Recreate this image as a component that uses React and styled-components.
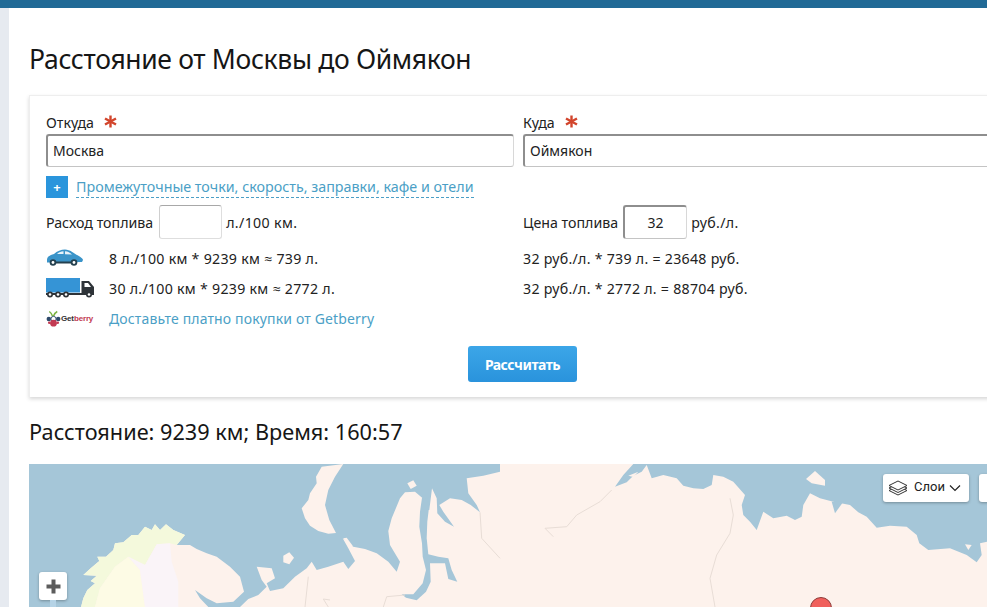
import React from "react";
import styled, { createGlobalStyle } from "styled-components";

const Global = createGlobalStyle`
  html, body { margin: 0; padding: 0; background: #fff; overflow: hidden; }
  body { font-family: "Noto Sans", "Open Sans", sans-serif; color: #1c1c1c; }
`;
const Page = styled.div`
  width: 987px; height: 607px; overflow: hidden; display: flex; flex-direction: column;
`;
const TopBar = styled.div`height: 8px; flex: none; background: #216a96;`;
const Body = styled.div`display: flex; flex: 1; min-height: 0;`;
const Gutter = styled.div`width: 9px; flex: none; background: #e6eaf0;`;
const Main = styled.main`
  flex: none; width: 1040px; padding-left: 20px; box-sizing: border-box;
`;
const Title = styled.h1`
  margin: 33px 0 0; height: 54px; font-size: 26.5px; line-height: 36px; font-weight: 400; color: #161616;
  letter-spacing: -0.35px;
`;
const Card = styled.section`
  box-sizing: border-box; height: 302px; background: #fff; border: 1px solid #eeeeee; border-bottom: 0;
  box-shadow: 0 2px 4px rgba(0,0,0,.16); padding: 15px 16px 0; display: flex; flex-direction: column;
`;
const Cols = styled.div`display: grid; grid-template-columns: 468px 1fr; column-gap: 9px;`;
const Field = styled.div`display: flex; flex-direction: column;`;
const Label = styled.label`
  height: 23px; display: flex; align-items: center; gap: 10px; font-size: 14.2px; line-height: 22px; color: #222;
`;
const Star = styled.svg`width: 13px; height: 13px; margin-top: -3px;`;
const BigInput = styled.input`
  box-sizing: border-box; width: 100%; height: 33px; padding: 0 5px 2px; font: inherit; font-size: 14px; color: #222;
  border-style: solid; border-color: #8e8e8e #d8d8d8 #c4c4c4 #8e8e8e; border-width: 2px 1px 1px 2px; border-radius: 3px;
  outline: none; background: #fff;
`;
const MoreRow = styled.div`display: flex; align-items: center; gap: 8px; margin-top: 9px; height: 22px;`;
const PlusBox = styled.span`
  width: 22px; height: 22px; background: #2a95dc; color: #fff; display: flex; align-items: center; justify-content: center;
  font-size: 13px; font-weight: 700; line-height: 1;
`;
const DashedLink = styled.a`
  font-size: 14.3px; line-height: 20px; color: #4b9fc6; border-bottom: 1px dashed #4b9fc6; letter-spacing: 0;
`;
const Rows = styled.div`display: grid; grid-template-columns: 468px 1fr; column-gap: 9px; margin-top: 7px;`;
const FuelCell = styled.div`display: flex; align-items: center; height: 34px; font-size: 14.2px; color: #222;`;
const Unit = styled.span`letter-spacing: 0.35px;`;
const SmallInput = styled.input`
  box-sizing: border-box; width: ${p => p.$w}px; height: 34px; margin: 0 4px 0 ${p => p.$ml}px; text-align: center; font: inherit; font-size: 14px; color: #222;
  border-style: solid; border-width: ${p => p.$strong ? "2px 1px 1px 2px" : "1px"};
  border-color: ${p => p.$strong ? "#8e8e8e #d8d8d8 #c4c4c4 #8e8e8e" : "#a8a8a8 #dedede #dedede #cfcfcf"}; border-radius: 3px; outline: none;
`;
const CalcCell = styled.div`
  display: flex; align-items: center; height: ${p => p.$h}px; font-size: 14.2px; letter-spacing: .27px; color: #222; margin-top: ${p => p.$mt || 0}px;
`;
const IconSlot = styled.span`width: 63px; flex: none; display: flex; align-items: center;`;
const PlainLink = styled.a`font-size: 14px; color: #4b9fc6; letter-spacing: 0.15px;`;
const LogoWrap = styled.span`display: flex; align-items: center; gap: 0;`;
const LogoText = styled.span`
  font-family: "Liberation Sans", sans-serif; font-size: 8px; font-weight: 700; letter-spacing: -0.15px; color: #333;
  b { color: #c23a52; font-weight: 700; }
`;
const SubmitWrap = styled.div`width: 945px; display: flex; justify-content: flex-start; padding-left: 422px; box-sizing: border-box; margin-top: 12px;`;
const Submit = styled.button`
  width: 109px; height: 36px; border: 0; border-radius: 3px; background: linear-gradient(#3ca6e8, #2a93dc);
  color: #fff; font: inherit; font-size: 14px; font-weight: 700; letter-spacing: -0.5px; padding: 0;
`;
const Result = styled.h2`
  margin: 18px 0 0; height: 49px; font-size: 21.7px; line-height: 34px; font-weight: 400; color: #161616;
`;
const MapBox = styled.div`position: relative; height: 143px; width: 1000px; overflow: hidden; background: #a5c6d8;`;
const MapArt = styled.svg`display: block;`;
const ZoomCtl = styled.div`
  position: absolute; left: 10px; top: 108px; width: 28px; height: 28px; background: #fff; border-radius: 3px;
  box-shadow: 0 1px 3px rgba(0,0,0,.3); display: flex; align-items: center; justify-content: center;
`;
const ZoomTrack = styled.div`
  position: absolute; left: 21px; top: 136px; width: 6px; height: 10px; background: #b5d3e6;
`;
const LayersBtn = styled.div`
  position: absolute; left: 854px; top: 10px; width: 86px; height: 28px; box-sizing: border-box; background: #fff; border-radius: 3px;
  box-shadow: 0 1px 3px rgba(0,0,0,.3); display: flex; align-items: center; padding-left: 5px; gap: 6px;
  font-family: Roboto, sans-serif; font-size: 13px; color: #222;
`;
const LayersText = styled.span`margin-top: -3px;`;
const Chevron = styled.svg`margin-left: -2px;`;
const ExtraBtn = styled.div`
  position: absolute; left: 950px; top: 10px; width: 40px; height: 28px; background: #fff; border-radius: 3px;
  box-shadow: 0 1px 3px rgba(0,0,0,.3);
`;

const WATER = "#a5c6d8";
const LAND = "#fdf2ec";
const LINE = "#e8ddd6";

const pts = (list) => list.map(([x, y]) => `${(x - 29).toFixed(1)},${(y - 464).toFixed(1)}`).join(" ");
const z3 = (list) => list.map(([x, y]) => [x / 3, 455 + y / 3]);
const z4 = (list) => list.map(([x, y]) => [500 + x / 3, 455 + y / 3]);

const scandCoast = [[243,456],[250,430],[262,405],[285,385],[272,378],[290,362],[250,360],[272,340],[298,318],[292,305],[318,305],[340,285],[345,265],[370,262],[395,240],[415,240],[435,215],[455,225],[465,208],[480,225],[498,208],[520,225],[555,240],[540,258],[530,270]];
const kola = [[530,270],[570,270],[590,282],[620,295],[650,305],[690,335],[720,365],[732,410],[700,440],[650,445],[620,430],[585,405],[600,430],[625,456]];
const landWest = z3([...scandCoast, ...kola]);
const northRussia = [[720,456],[745,432],[775,420],[800,395],[785,375],[770,335],[815,340],[825,370],[800,385],[810,408],[850,400],[885,365],[920,340],[935,320],[950,345],[985,335],[1030,320],[1045,342],[1065,318],[1045,280],[1028,250],[1060,275],[1095,282],[1130,295],[1165,320],[1190,350],[1200,320],[1182,290],[1170,270],[1165,228],[1175,190],[1200,130],[1215,112],[1245,110],[1268,130],[1278,165],[1288,165],[1296,100],[1310,130],[1312,175],[1335,200],[1362,215],[1330,170],[1318,150],[1350,130],[1385,135],[1412,150],[1440,172],[1430,150],[1405,115],[1400,70],[1450,62],[1500,50]];
const eastCoast = [[0,27],[400,27],[370,60],[345,95],[380,82],[400,62],[425,50],[440,30],[455,70],[490,60],[530,70],[550,92],[580,100],[610,102],[635,90],[640,60],[670,65],[700,80],[735,120],[725,150],[730,180],[750,200],[770,225],[790,170],[820,190],[860,182],[885,195],[905,185],[910,150],[930,115],[960,130],[1000,140],[1050,150],[1075,172],[1100,185],[1130,218],[1170,212],[1220,215],[1250,240],[1258,265],[1285,285],[1350,280],[1400,300],[1430,322],[1445,300],[1440,265],[1461,260],[1500,250],[1500,456]];
const landMid = [...z3(northRussia), ...z4(eastCoast)];
const obGulf = z3([[1266,128],[1260,170],[1258,215],[1266,265],[1268,305],[1278,345],[1268,385],[1240,418],[1205,418],[1218,428],[1250,436],[1278,410],[1292,380],[1290,325],[1335,325],[1345,372],[1372,380],[1355,345],[1345,310],[1315,305],[1285,298],[1280,250],[1282,200],[1286,165],[1282,130]]);
const novaya = z3([[1030,27],[965,35],[948,65],[950,85],[930,115],[925,135],[905,160],[915,190],[930,212],[955,228],[985,236],[1008,234],[988,195],[975,150],[985,105],[1005,65]]);
const kolguev = z3([[850,302],[868,292],[882,308],[868,328],[850,322]]);
const belyi = z3([[1222,85],[1240,76],[1250,92],[1232,102]]);
const vaigach = z3([[1030,250],[1040,248],[1058,272],[1048,278]]);
const taymyrBay = z4([[918,72],[945,48],[975,75],[975,92],[935,85]]);
const innerIsl = z4([[1395,268],[1415,270],[1405,285]]);
const inletIsl = z4([[385,62],[415,50],[400,66]]);
const yenisei = z4([[995,140],[1030,140],[1005,175]]);

const norwayInner = [[530,270],[510,265],[470,268],[435,330],[385,305],[345,335],[300,400],[285,456]];
const norway = z3([...scandCoast, ...norwayInner]);
const sweden = z3([[285,456],[300,400],[345,335],[385,305],[420,345],[435,456]]);
const finland = z3([[435,456],[420,345],[385,305],[435,330],[470,268],[510,265],[515,320],[535,380],[535,456]]);

const Car = () => (
  <svg width="37" height="18" viewBox="0 0 37 18" aria-hidden="true">
    <path d="M1 11 C1 7 5 6 8 5 C11 2 15 0.5 19 0.5 C24 0.5 28 4.5 32 6.5 C35 8 37 10 37 11 L36 13 L1 13.5 Z" fill="#3a94c9" />
    <path d="M11 5 C13 3.3 15 2.5 17.5 2.3 L17.5 5 Z M19 2.3 C22 2.3 24 3.7 26 5.5 L19 5.2 Z" fill="#e8f3fa" />
    <rect x="8" y="12.5" width="20" height="2" fill="#24404f" />
    <circle cx="7" cy="13.5" r="3.3" fill="#24404f" /><circle cx="7" cy="13.5" r="1.4" fill="#fff" />
    <circle cx="28" cy="13.5" r="3.3" fill="#24404f" /><circle cx="28" cy="13.5" r="1.4" fill="#fff" />
  </svg>
);
const Truck = () => (
  <svg width="49" height="20" viewBox="0 0 49 20" aria-hidden="true">
    <rect x="0" y="0" width="34" height="14.5" fill="#3594d6" />
    <path d="M35.5 3 H43 L48 9 V16 H35.5 Z" fill="#2e3338" />
    <path d="M38.5 5 H42 L45 9 H38.5 Z" fill="#fff" />
    <rect x="0" y="15" width="48" height="2" fill="#2e3338" />
    {[4, 12, 20, 43].map(cx => (
      <g key={cx}><circle cx={cx} cy="16.5" r="3" fill="#2e3338" /><circle cx={cx} cy="16.5" r="1.3" fill="#fff" /></g>
    ))}
  </svg>
);
const Berry = () => (
  <svg width="15" height="18" viewBox="0 0 16 18" aria-hidden="true">
    <path d="M7 6 C6 3 5 2 3.5 1 M8 6 C9 3 10 2 12 1" stroke="#7cb342" strokeWidth="1.6" fill="none" />
    <circle cx="3" cy="9" r="2.4" fill="#2e4a6b" />
    <circle cx="13" cy="9" r="2.4" fill="#2e4a6b" />
    <circle cx="8" cy="9" r="2.8" fill="#fff" stroke="#2e4a6b" />
    <circle cx="8" cy="13.5" r="3.6" fill="#c23a52" />
    <circle cx="3.5" cy="13" r="1.4" fill="#c23a52" />
    <circle cx="12.5" cy="13" r="1.4" fill="#c23a52" />
  </svg>
);
const StarIcon = () => (
  <Star viewBox="0 0 13 13" aria-hidden="true">
    <g stroke="#d2452c" strokeWidth="2.4" strokeLinecap="butt">
      <line x1="6.5" y1="0.5" x2="6.5" y2="12.5" />
      <line x1="1" y1="3.5" x2="12" y2="9.5" />
      <line x1="12" y1="3.5" x2="1" y2="9.5" />
    </g>
  </Star>
);

export default function App() {
  return (
    <Page>
      <Global />
      <TopBar />
      <Body>
        <Gutter />
        <Main>
          <Title>Расстояние от Москвы до Оймякон</Title>
          <Card>
            <Cols>
              <Field>
                <Label>Откуда <StarIcon /></Label>
                <BigInput readOnly value="Москва" />
              </Field>
              <Field>
                <Label>Куда <StarIcon /></Label>
                <BigInput readOnly value="Оймякон" />
              </Field>
            </Cols>
            <MoreRow>
              <PlusBox>+</PlusBox>
              <DashedLink>Промежуточные точки, скорость, заправки, кафе и отели</DashedLink>
            </MoreRow>
            <Rows>
              <FuelCell>Расход топлива<SmallInput $w={63} $ml={6} readOnly /><Unit>л./100 км.</Unit></FuelCell>
              <FuelCell>Цена топлива<SmallInput $w={64} $ml={5} $strong readOnly value="32" /><Unit>руб./л.</Unit></FuelCell>
              <CalcCell $h={30} $mt={4}><IconSlot><Car /></IconSlot>8 л./100 км * 9239 км ≈ 739 л.</CalcCell>
              <CalcCell $h={30} $mt={4}>32 руб./л. * 739 л. = 23648 руб.</CalcCell>
              <CalcCell $h={30}><IconSlot><Truck /></IconSlot>30 л./100 км * 9239 км ≈ 2772 л.</CalcCell>
              <CalcCell $h={30}>32 руб./л. * 2772 л. = 88704 руб.</CalcCell>
              <CalcCell $h={31}>
                <IconSlot><LogoWrap><Berry /><LogoText>Get<b>berry</b></LogoText></LogoWrap></IconSlot>
                <PlainLink>Доставьте платно покупки от Getberry</PlainLink>
              </CalcCell>
            </Rows>
            <SubmitWrap><Submit>Рассчитать</Submit></SubmitWrap>
          </Card>
          <Result>Расстояние: 9239 км; Время: 160:57</Result>
          <MapBox>
            <MapArt width="1000" height="143" viewBox="0 0 1000 143" aria-hidden="true">
              <polygon points={pts(landWest)} fill={LAND} />
              <polygon points={pts(norway)} fill="#f4f9dc" />
              <polygon points={pts(sweden)} fill="#fdfbe5" />
              <polygon points={pts(finland)} fill="#faf4f8" />
              <polygon points={pts(landMid)} fill={LAND} />
              <polygon points={pts(obGulf)} fill={WATER} />
              <polygon points={pts(novaya)} fill={LAND} />
              <polygon points={pts(kolguev)} fill={LAND} />
              <polygon points={pts(belyi)} fill={LAND} />
              <polygon points={pts(vaigach)} fill={LAND} />
              <polygon points={pts(taymyrBay)} fill={LAND} />
              <polygon points={pts(innerIsl)} fill={LAND} />
              <polygon points={pts(inletIsl)} fill={LAND} />
              <polygon points={pts(yenisei)} fill={WATER} />
              <polyline points={pts(z4([[335,105],[300,140],[230,180],[200,215],[135,220],[160,245]]))} fill="none" stroke={LINE} strokeWidth="1" />
              <polyline points={pts(z4([[690,130],[700,180],[690,235],[650,300],[630,370],[645,456]]))} fill="none" stroke={LINE} strokeWidth="1" />
              <polyline points={pts(z3([[1440,172],[1445,250],[1500,310]]))} fill="none" stroke={LINE} strokeWidth="1" />
              <polyline points={pts(z3([[925,365],[915,456]]))} fill="none" stroke={LINE} strokeWidth="1" />
              <polyline points={pts(z3([[1150,456],[1160,425],[1215,420]]))} fill="none" stroke={LINE} strokeWidth="1" />
              <polyline points={pts(z3([[985,456],[970,432],[990,435]]))} fill="none" stroke={LINE} strokeWidth="1" />
              <circle cx={792} cy={144} r="10.5" fill="#f0605c" stroke="#8d3b39" strokeWidth="1" />
            </MapArt>
            <ZoomCtl>
              <svg width="15" height="15" viewBox="0 0 15 15" aria-hidden="true"><path d="M5.5 0.5h4v5h5v4h-5v5h-4v-5h-5v-4h5z" fill="#5c5c5c" /></svg>
            </ZoomCtl>
            <ZoomTrack />
            <LayersBtn>
              <svg width="20" height="17" viewBox="0 0 20 17" fill="#fff" stroke="#333" strokeWidth="1" aria-hidden="true">
                <path d="M1 10.5 L10 15 L19 10.5 L10 6 Z" /><path d="M1 8 L10 12.5 L19 8 L10 3.5 Z" /><path d="M1 5.5 L10 10 L19 5.5 L10 1 Z" />
              </svg>
              <LayersText>Слои</LayersText>
              <Chevron width="12" height="8" viewBox="0 0 12 8" fill="none" stroke="#222" strokeWidth="1.2" aria-hidden="true"><path d="M1 1.5 L6 6.5 L11 1.5" /></Chevron>
            </LayersBtn>
            <ExtraBtn />
          </MapBox>
        </Main>
      </Body>
    </Page>
  );
}
